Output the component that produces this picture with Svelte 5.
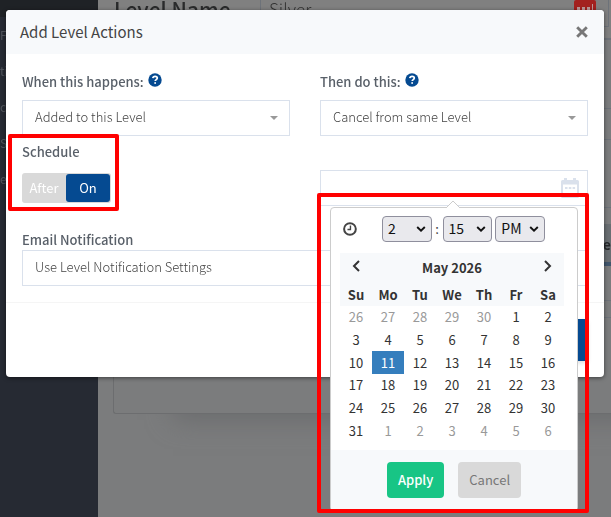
<script>
  const navItems = ['F', 'tio', 'co', 'S', 'e'];
  const weekdays = ['Su', 'Mo', 'Tu', 'We', 'Th', 'Fr', 'Sa'];
  const first = new Date(2026, 3, 26);
  const weeks = Array.from({ length: 6 }, (_, w) =>
    Array.from({ length: 7 }, (_, d) => {
      const day = new Date(first.getFullYear(), first.getMonth(), first.getDate() + w * 7 + d);
      return { n: day.getDate(), off: day.getMonth() !== 4, active: day.getMonth() === 4 && day.getDate() === 11 };
    })
  );
  let schedule = $state('on');
</script>

{#snippet help()}
  <svg class="help" viewBox="0 0 14 14" aria-hidden="true">
    <circle cx="7" cy="7" r="6.7" fill="#054a91" />
    <path d="M4.8 5.2C5 3.9 5.9 3.3 7.1 3.3c1.3 0 2.2.7 2.2 1.8 0 1.5-2.1 1.5-2.1 3" fill="none" stroke="#fff" stroke-width="1.7" />
    <rect x="6.3" y="9.2" width="1.7" height="1.6" fill="#fff" />
  </svg>
{/snippet}

{#snippet caret()}
  <svg class="caret" viewBox="0 0 8 4" aria-hidden="true"><path d="M0 0h8L4 4z" fill="#999" /></svg>
{/snippet}

{#snippet chevron()}
  <svg class="chev" viewBox="0 0 10 6" aria-hidden="true"><path d="M1.2 1 5 4.7 8.8 1" fill="none" stroke="#111" stroke-width="1.9" /></svg>
{/snippet}

<div class="backdrop">
  <div class="sidebar">
    <div class="brand"></div>
    <div class="nav">
      {#each navItems as item}<span>{item}</span>{/each}
    </div>
  </div>
  <div class="page">
    <div class="page-head">
      <span class="level">Level Name</span>
      <div class="name-box">
        <span>Silver</span>
        <svg class="dots" viewBox="0 0 22 16" aria-hidden="true">
          <rect width="22" height="16" rx="2" fill="#a3211f" />
          <path d="M3 7h3v3H3zM8 7h3v3H8zM13 7h3v3h-3zM18 4h1v8h-1z" fill="#b99" />
        </svg>
      </div>
    </div>
    <div class="panel">
      <div class="p-row r1"></div>
      <div class="p-row r2"></div>
      <div class="p-row r3"></div>
      <div class="p-row tab">ne</div>
      <div class="p-row r4"></div>
      <div class="p-row r5"></div>
    </div>
  </div>
</div>

<main>
  <div class="modal" role="dialog" aria-labelledby="title">
    <header>
      <h1 id="title">Add Level Actions</h1>
      <button class="close" aria-label="Close">
        <svg viewBox="0 0 10 10"><path d="M1 1l8 8M9 1l-8 8" stroke="#777" stroke-width="2.4" /></svg>
      </button>
    </header>

    <div class="body">
      <div class="columns">
        <div class="field">
          <label for="when">When this happens: {@render help()}</label>
          <div class="select">
            <select id="when"><option>Added to this Level</option></select>
            {@render caret()}
          </div>
        </div>
        <div class="field">
          <label for="then">Then do this: {@render help()}</label>
          <div class="select">
            <select id="then"><option>Cancel from same Level</option></select>
            {@render caret()}
          </div>
        </div>

        <div class="schedule">
          <span class="label" id="sched">Schedule</span>
          <div class="toggle" role="group" aria-labelledby="sched">
            <button class:on={schedule === 'after'} onclick={() => (schedule = 'after')}>After</button>
            <button class:on={schedule === 'on'} onclick={() => (schedule = 'on')}>On</button>
          </div>
          <div class="mark mark-schedule"></div>
        </div>

        <div class="date">
          <input type="text" aria-label="Schedule date" />
          <svg class="cal" viewBox="0 0 18 20" aria-hidden="true">
            <path d="M3 0h3v2h6V0h3v2h1.5Q18 2 18 3.500V18.500Q18 20 16.500 20h-15Q0 20 0 18.500v-15Q0 2 1.500 2H3z" fill="#dae1ec" />
            <path d="M2 6.500h14V18H2z" fill="#fff" />
            <path d="M4 9h2.500v2H4zM7.800 9h2.500v2H7.800zM11.600 9h2.500v2h-2.500z" fill="#dae1ec" />
          </svg>

          <div class="picker">
            <svg class="arrow" viewBox="0 0 14 8" aria-hidden="true"><path d="M0 8 7 1l7 7" fill="#fff" stroke="#ccc" /></svg>
            <div class="time">
              <svg class="clock" viewBox="0 0 14 14" aria-hidden="true">
                <circle cx="7" cy="7" r="5.900" fill="none" stroke="#444" stroke-width="2" />
                <path d="M7.500 3.500v4h-3" fill="none" stroke="#444" stroke-width="1.400" />
              </svg>
              <div class="tsel"><select aria-label="Hour"><option>2</option></select>{@render chevron()}</div>
              <span class="colon">:</span>
              <div class="tsel"><select aria-label="Minute"><option>15</option></select>{@render chevron()}</div>
              <div class="tsel ampm"><select aria-label="AM or PM"><option>PM</option></select>{@render chevron()}</div>
            </div>

            <div class="month">
              <div class="month-head">
                <button aria-label="Previous month"><svg viewBox="0 0 8 12"><path d="M7 1 2 6l5 5" fill="none" stroke="#333" stroke-width="2" /></svg></button>
                <span>May 2026</span>
                <button aria-label="Next month"><svg viewBox="0 0 8 12"><path d="M1 1l5 5-5 5" fill="none" stroke="#333" stroke-width="2" /></svg></button>
              </div>
              <table>
                <thead>
                  <tr>{#each weekdays as d}<th>{d}</th>{/each}</tr>
                </thead>
                <tbody>
                  {#each weeks as week}
                    <tr>{#each week as day}<td class:off={day.off} class:active={day.active}>{day.n}</td>{/each}</tr>
                  {/each}
                </tbody>
              </table>
            </div>

            <div class="actions">
              <button class="apply">Apply</button>
              <button class="cancel">Cancel</button>
            </div>
          </div>
          <div class="mark mark-date"></div>
        </div>
      </div>

      <div class="email">
        <label for="email">Email Notification</label>
        <div class="select">
          <select id="email"><option>Use Level Notification Settings</option></select>
          {@render caret()}
        </div>
      </div>
    </div>

    <footer><button class="save" aria-label="Save"></button></footer>
  </div>
</main>

<style>
  :global(body) { margin: 0; background: #7b7c7d; }
  :global(#app) { font-family: 'Noto Sans CJK SC', 'Noto Sans', sans-serif; font-size: 13px; line-height: 20px; color: #444; }
  * { box-sizing: border-box; }
  button, select, input { font: inherit; color: inherit; margin: 0; padding: 0; border: 0; background: none; border-radius: 0; }
  button { cursor: pointer; }
  select { appearance: none; width: 100%; }
  svg { display: block; }

  .backdrop { position: fixed; inset: 0; display: flex; overflow: hidden; }
  .sidebar { flex: 0 0 98px; background: #262a33; color: #51555c; }
  .brand { height: 17px; background: #1f2226; }
  .nav { display: flex; flex-direction: column; font-size: 12px; }
  .nav span { height: 36px; line-height: 36px; }
  .page { flex: 1; min-width: 0; }
  .page-head { height: 38px; padding: 0 2px 0 16px; display: flex; background: #808080; }
  .level { width: 146px; font-size: 21px; line-height: 18px; font-weight: 500; color: #2a2b2c; white-space: nowrap; }
  .name-box { flex: 1; height: 27px; padding: 0 12px 0 8px; display: flex; justify-content: space-between; border: solid #6d7279; border-width: 0 1px 1px; font-size: 17px; line-height: 18px; font-weight: 300; color: #333; }
  .dots { width: 22px; height: 16px; }
  .panel { height: 376px; margin-left: 15px; border: solid #6c6d6f; border-width: 0 0 1px 1px; border-radius: 0 0 0 3px; box-shadow: 50px 16px 24px -10px #6b6c6e; background: #7b7c7d; }
  .p-row { border-bottom: 1px solid #6d7279; text-align: right; }
  .r1 { height: 71px; border-top: 2px solid #6d7279; }
  .r2 { height: 31px; }
  .r3 { height: 68px; }
  .tab { height: 58px; padding-top: 26px; border-bottom: 4px solid #41566c; background: linear-gradient(#7b7c7d 16px, #696e72 16px); color: #26282b; font-weight: 700; font-size: 14px; }
  .r4 { height: 35px; }
  .r5 { height: 17px; }

  main { position: relative; min-height: 100vh; padding: 10px 7px 0 6px; }
  .modal { background: #fff; border-radius: 4px; box-shadow: 0 1px 4px rgba(0, 0, 0, .5); }
  header { height: 44px; padding: 0 16px 0 14px; display: flex; align-items: center; justify-content: space-between; background: #f7f9fb; border-radius: 4px 4px 0 0; }
  h1 { margin: 0; font-size: 15px; font-weight: 400; color: #444; }
  .close svg { width: 12px; height: 12px; }
  .body { padding: 16px; border-bottom: 1px solid #f5f5f5; }
  .columns { display: grid; grid-template-columns: 1fr 1fr; column-gap: 30px; row-gap: 6px; }
  label, .label { display: flex; align-items: center; font-weight: 500; color: #596069; }
  .field label { height: 24px; margin-bottom: 6px; gap: 4px; }
  .help { width: 14px; height: 14px; margin-bottom: 4px; }
  .select { position: relative; height: 36px; }
  .select select { height: 36px; padding: 0 12px 2px; border: 1px solid #dae1ec; background: #fff; font-weight: 300; color: #444; }
  .caret { position: absolute; right: 12px; top: 16px; width: 8px; height: 4px; }

  .schedule { position: relative; }
  .schedule .label { height: 20px; margin-bottom: 11px; }
  .toggle { display: inline-flex; height: 30px; border-radius: 3px; background: #d9d9d9; padding: 1px 1px 1px 0; }
  .toggle button { width: 44px; color: #fff; border-radius: 3px; }
  .toggle .on { background: #054a91; }
  .mark { position: absolute; z-index: 2; border: 4px solid #f00; border-radius: 2px; pointer-events: none; }
  .mark-schedule { left: -14px; top: -8px; width: 111px; height: 77px; }
  .mark-date { left: -3px; right: -1px; top: 51px; height: 320px; }

  .date { position: relative; padding-top: 28px; }
  .date input { display: block; width: 100%; height: 36px; padding: 0 34px 0 12px; border: 1px solid #dae1ec; background: #fff; }
  .cal { position: absolute; right: 9px; top: 36px; width: 18px; height: 20px; }
  .picker { position: absolute; z-index: 1; top: 65px; right: 10px; width: 248px; border: 1px solid #ccc; border-radius: 4px; background: #fff; }
  .arrow { position: absolute; top: -8px; left: 115px; width: 14px; height: 8px; }
  .time { display: flex; align-items: center; height: 45px; padding: 0 32px 4px 12px; }
  .clock { width: 14px; height: 14px; margin-right: 25px; }
  .tsel { position: relative; width: 50px; height: 26px; }
  .tsel select { height: 26px; padding: 0 0 1px 5px; border: 1px solid #8f8f9d; border-radius: 4px; background: #e9e9ed; color: #111; font-size: 14px; }
  .chev { position: absolute; right: 6px; top: 10px; width: 10px; height: 6px; }
  .ampm { margin-left: 3px; }
  .colon { width: 11px; text-align: center; }

  .month { margin: 0 13px 0 9px; color: #333; }
  .month-head { display: flex; align-items: center; height: 30px; background: #f7f9fb; font-weight: 700; }
  .month-head span { flex: 1; text-align: center; }
  .month-head button { width: 32px; height: 28px; display: flex; align-items: center; justify-content: center; margin-bottom: 4px; }
  .month-head svg { width: 8px; height: 12px; }
  table { width: 100%; height: 159px; table-layout: fixed; border-collapse: collapse; text-align: center; line-height: 18px; }
  thead { background: #f7f9fb; }
  th { height: 23px; padding: 0; font-weight: 700; }
  td { padding: 0; }
  .off { color: #999; }
  .active { background: #357ebd; color: #fff; }

  .actions { height: 60px; margin-top: 8px; padding-top: 12px; display: flex; justify-content: center; gap: 14px; background: #f7f9fb; }
  .actions button { height: 36px; padding: 0 11px; border-radius: 4px; }
  .apply { background: #18c585; color: #fff; font-weight: 500; }
  .cancel { background: #d9d9d9; color: #777; }

  .email { padding-top: 24px; }
  .email label { height: 20px; }

  footer { padding: 16px; display: flex; justify-content: flex-end; }
  .save { width: 80px; height: 42px; border-radius: 3px; background: #054a91; box-shadow: 0 2px 4px #ddd; }
</style>
